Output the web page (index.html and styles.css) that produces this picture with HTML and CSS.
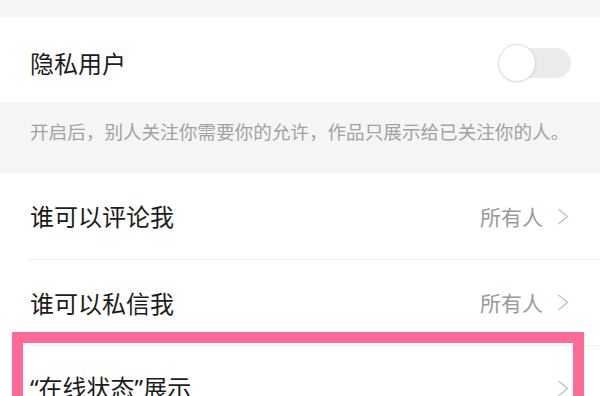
FILE: index.html
```html
<!DOCTYPE html>
<html lang="zh-CN">
<head>
    <meta charset="UTF-8">
    <title>隐私设置</title>
    <link rel="stylesheet" href="styles.css">
</head>
<body>
    <div class="top-gap"></div>
    <div class="section">
        <div class="row row-switch">
            <span class="label">隐私用户</span>
            <div class="switch">
                <div class="track"></div>
                <div class="knob"></div>
            </div>
        </div>
    </div>
    <div class="tip">开启后，别人关注你需要你的允许，作品只展示给已关注你的人。</div>
    <div class="section list">
        <div class="row">
            <span class="label">谁可以评论我</span>
            <span class="value">所有人</span>
            <svg class="arrow" width="12" height="17" viewBox="0 0 12 17"><polyline points="1.5,1 10.5,8.5 1.5,16" fill="none" stroke="#c2c2c2" stroke-width="1.4"/></svg>
        </div>
        <div class="row">
            <span class="label">谁可以私信我</span>
            <span class="value">所有人</span>
            <svg class="arrow" width="12" height="17" viewBox="0 0 12 17"><polyline points="1.5,1 10.5,8.5 1.5,16" fill="none" stroke="#c2c2c2" stroke-width="1.4"/></svg>
        </div>
        <div class="row row-mark">
            <span class="label">“在线状态”展示</span>
            <svg class="arrow" width="12" height="17" viewBox="0 0 12 17"><polyline points="1.5,1 10.5,8.5 1.5,16" fill="none" stroke="#c2c2c2" stroke-width="1.4"/></svg>
            <div class="mark"></div>
        </div>
    </div>
</body>
</html>
```

FILE: styles.css
```css
* {
    margin: 0;
    padding: 0;
    box-sizing: border-box;
}
body {
    background: #f5f5f5;
    font-family: "Noto Sans CJK SC", "Noto Sans", sans-serif;
    color: #1c1c1c;
    overflow: hidden;
}
.top-gap {
    height: 17px;
}
.section {
    background: #fff;
}
.row {
    display: flex;
    align-items: center;
    height: 86px;
    padding: 0 31px 0 30px;
    position: relative;
}
.list .row + .row {
    border-top: 1px solid #efefef;
    margin-left: 27px;
    padding-left: 3px;
}
.row-switch {
    height: 85px;
    padding-top: 6px;
    padding-right: 29px;
}
.label {
    font-size: 24px;
    line-height: 1;
    flex: 1;
}
.value {
    font-size: 21px;
    line-height: 1;
    color: #9a9a9a;
    margin-right: 14px;
}
.arrow {
    display: block;
}
.switch {
    width: 73px;
    height: 38px;
    position: relative;
}
.track {
    position: absolute;
    left: 4px;
    right: 0;
    top: 4px;
    bottom: 4px;
    background: #ebebeb;
    border-radius: 15px;
}
.knob {
    position: absolute;
    left: 0;
    top: 0;
    width: 38px;
    height: 38px;
    border-radius: 50%;
    background: #fff;
    border: 1.5px solid #dcdcdc;
    box-shadow: 0 1px 2px rgba(0, 0, 0, .08);
}
.tip {
    height: 71px;
    padding: 19px 0 0 30px;
    font-size: 18.6px;
    line-height: 19px;
    color: #a2a2a2;
}
.row-mark .label {
    margin-top: -2px;
    font-family: "Noto Sans", "Noto Sans CJK SC", sans-serif;
}
.mark {
    position: absolute;
    left: -15px;
    right: 16px;
    top: -14px;
    height: 120px;
    border: 11px solid #fc6a95;
}
```
